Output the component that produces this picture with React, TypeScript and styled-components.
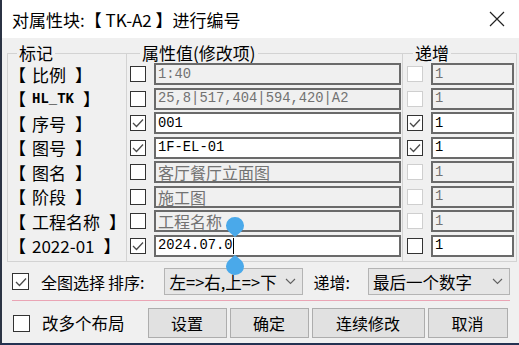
import React from 'react';
import styled, { createGlobalStyle } from 'styled-components';

const Global = createGlobalStyle`
  html, body { margin: 0; padding: 0; background: #f0f0f0; }
  body { font-family: "Noto Sans CJK SC", sans-serif; color: #000; }
`;

const Window = styled.div`
  position: relative;
  box-sizing: border-box;
  width: 519px;
  height: 345px;
  background: #f0f0f0;
  border-left: 2px solid #2b3344;
  border-bottom: 2px solid #243252;
  display: flex;
  flex-direction: column;
  overflow: hidden;
`;

const TitleBar = styled.div`
  height: 38px;
  flex: none;
  background: #ffffff;
  display: flex;
  align-items: center;
  justify-content: space-between;
  padding: 0 14px 0 10px;
  font-size: 17px;
`;

const Body = styled.div`
  display: flex;
  flex-direction: column;
  padding: 7px 0 0 5px;
`;

const Groups = styled.div`
  display: flex;
`;

const Group = styled.fieldset<{ $w: number; $first?: boolean }>`
  box-sizing: border-box;
  width: ${p => p.$w}px;
  min-width: 0;
  margin: 0;
  padding: 1px 0 3px 0;
  border: 1px solid #d3d3d3;
  ${p => (p.$first ? '' : 'border-left: none;')}
`;

const Legend = styled.legend<{ $ml: number }>`
  margin-left: ${p => p.$ml}px;
  padding: 0 2px;
  font-size: 17px;
  line-height: 16px;
  white-space: nowrap;
`;

const Rows = styled.div<{ $cols: string; $pl: number }>`
  display: grid;
  grid-template-columns: ${p => p.$cols};
  grid-auto-rows: 24.5px;
  align-items: center;
  column-gap: 8px;
  padding-left: ${p => p.$pl}px;
`;

const Tag = styled.div`
  display: flex;
  align-items: center;
  font-size: 17px;
  white-space: nowrap;
  margin-left: 1px;
`;

const TagName = styled.span<{ $latin?: boolean }>`
  margin: 0 9px 0 6px;
  font-family: ${p => (p.$latin ? '"Liberation Mono", monospace' : 'inherit')};
  font-size: ${p => (p.$latin ? '14px' : '17px')};
  font-weight: ${p => (p.$latin ? 700 : 400)};
`;

type BoxState = 'on' | 'off' | 'disabled';

const Box = styled.span<{ $state: BoxState; $size?: number }>`
  box-sizing: border-box;
  width: ${p => p.$size ?? 16}px;
  height: ${p => p.$size ?? 16}px;
  border: 1px solid ${p => (p.$state === 'disabled' ? '#cfcfcf' : '#333333')};
  background: #ffffff;
  display: inline-flex;
  align-items: center;
  justify-content: center;
  flex: none;
`;

const Field = styled.div<{ $enabled: boolean; $cjk?: boolean }>`
  box-sizing: border-box;
  height: 22px;
  border: 2px solid #6a6a6a;
  background: ${p => (p.$enabled ? '#ffffff' : '#f0f0f0')};
  color: ${p => (p.$enabled ? '#000000' : '#727272')};
  font-family: ${p =>
    p.$cjk ? '"Noto Sans CJK SC", sans-serif' : '"Liberation Mono", "Noto Sans CJK SC", monospace'};
  font-size: ${p => (p.$cjk ? '16px' : '13.8px')};
  padding-left: 2px;
  white-space: nowrap;
  overflow: hidden;
  display: flex;
  align-items: center;
`;

const Caret = styled.span`
  display: inline-block;
  width: 0;
  height: 16px;
  border-left: 1px solid #000;
`;

const OptionsRow = styled.div`
  display: flex;
  align-items: center;
  height: 27px;
  margin-top: 6px;
  padding-left: 5px;
  font-size: 16px;
`;

const Text = styled.span<{ $ml?: number }>`
  margin-left: ${p => p.$ml ?? 0}px;
  white-space: nowrap;
`;

const Select = styled.div<{ $w: number; $ml: number }>`
  box-sizing: border-box;
  width: ${p => p.$w}px;
  height: 27px;
  margin-left: ${p => p.$ml}px;
  border: 1px solid #b4b4b4;
  background: #e6e6e6;
  display: flex;
  align-items: center;
  justify-content: space-between;
  padding: 0 6px 0 4px;
  font-size: 16.5px;
  white-space: nowrap;
`;

const Divider = styled.div`
  height: 1px;
  background: #eaa5b5;
  margin: 5px 9px 0 5px;
`;

const ButtonRow = styled.div`
  display: flex;
  align-items: center;
  height: 30px;
  margin-top: 7px;
  padding-left: 6px;
  font-size: 16.5px;
`;

const Buttons = styled.div`
  display: flex;
  gap: 3px;
  margin-left: 23px;
`;

const Btn = styled.button<{ $w: number }>`
  box-sizing: border-box;
  width: ${p => p.$w}px;
  height: 30px;
  padding: 0;
  background: #e1e1e1;
  border: 1px solid #adadad;
  font-family: "Noto Sans CJK SC", sans-serif;
  font-size: 16px;
  color: #000;
`;

const Handles = styled.svg`
  position: absolute;
  left: 219px;
  top: 217px;
`;

const Check = () => (
  <svg width="14" height="14" viewBox="0 0 14 14">
    <polyline points="2,7 5.5,10.5 12,3.5" fill="none" stroke="#4a4a4a" strokeWidth="1.3" />
  </svg>
);

const CheckBox = ({ state, size }: { state: BoxState; size?: number }) => (
  <Box $state={state} $size={size}>{state === 'on' && <Check />}</Box>
);

const Chevron = () => (
  <svg width="11" height="7" viewBox="0 0 11 7">
    <polyline points="1,1 5.5,5.5 10,1" fill="none" stroke="#606060" strokeWidth="1.1" />
  </svg>
);

type Row = {
  tag: string;
  latin?: boolean;
  on: boolean;
  value: string;
  cjk?: boolean;
  inc: BoxState;
  caret?: boolean;
};

const rows: Row[] = [
  { tag: '比例', on: false, value: '1:40', inc: 'disabled' },
  { tag: 'HL_TK', latin: true, on: false, value: '25,8|517,404|594,420|A2', inc: 'disabled' },
  { tag: '序号', on: true, value: '001', inc: 'on' },
  { tag: '图号', on: true, value: '1F-EL-01', inc: 'on' },
  { tag: '图名', on: false, value: '客厅餐厅立面图', cjk: true, inc: 'disabled' },
  { tag: '阶段', on: false, value: '施工图', cjk: true, inc: 'disabled' },
  { tag: '工程名称', on: false, value: '工程名称', cjk: true, inc: 'disabled' },
  { tag: '2022-01', on: true, value: '2024.07.0', inc: 'off', caret: true },
];

export default function App() {
  return (
    <Window>
      <Global />
      <TitleBar>
        <span>对属性块:【 TK-A2 】进行编号</span>
        <svg width="16" height="16" viewBox="0 0 16 16">
          <path d="M1 1 L15 15 M15 1 L1 15" stroke="#222" strokeWidth="1.2" />
        </svg>
      </TitleBar>
      <Body>
        <Groups>
          <Group $w={120} $first>
            <Legend $ml={9}>标记</Legend>
            <Rows $cols="1fr" $pl={0}>
              {rows.map(r => (
                <Tag key={r.tag}>
                  <span>【</span>
                  <TagName $latin={r.latin}>{r.tag}</TagName>
                  <span>】</span>
                </Tag>
              ))}
            </Rows>
          </Group>
          <Group $w={276}>
            <Legend $ml={13}>属性值(修改项)</Legend>
            <Rows $cols="16px 247px" $pl={3}>
              {rows.map(r => (
                <React.Fragment key={r.tag}>
                  <CheckBox state={r.on ? 'on' : 'off'} />
                  <Field $enabled={r.on} $cjk={r.cjk}>
                    {r.value}
                    {r.caret && <Caret />}
                  </Field>
                </React.Fragment>
              ))}
            </Rows>
          </Group>
          <Group $w={114}>
            <Legend $ml={10}>递增</Legend>
            <Rows $cols="16px 83px" $pl={4}>
              {rows.map(r => (
                <React.Fragment key={r.tag}>
                  <CheckBox state={r.inc} />
                  <Field $enabled={r.inc !== 'disabled'}>1</Field>
                </React.Fragment>
              ))}
            </Rows>
          </Group>
        </Groups>
        <OptionsRow>
          <CheckBox state="on" size={17} />
          <Text $ml={12}>全图选择</Text>
          <Text $ml={3}>排序:</Text>
          <Select $w={139} $ml={20}>
            <span>左=&gt;右,上=&gt;下</span>
            <Chevron />
          </Select>
          <Text $ml={10}>递增:</Text>
          <Select $w={142} $ml={18}>
            <span>最后一个数字</span>
            <Chevron />
          </Select>
        </OptionsRow>
        <Divider />
        <ButtonRow>
          <CheckBox state="off" size={17} />
          <Text $ml={12}>改多个布局</Text>
          <Buttons>
            <Btn $w={79}>设置</Btn>
            <Btn $w={79}>确定</Btn>
            <Btn $w={113}>连续修改</Btn>
            <Btn $w={80}>取消</Btn>
          </Buttons>
        </ButtonRow>
      </Body>
      <Handles width="28" height="60" viewBox="0 0 28 60">
        <path d="M14 20 L7.6 14.6 A9 8.5 0 1 1 20.4 14.6 Z" fill="#4aa9ea" />
        <path d="M14 38 L7.6 43.4 A9 8.5 0 1 0 20.4 43.4 Z" fill="#4aa9ea" />
      </Handles>
    </Window>
  );
}
